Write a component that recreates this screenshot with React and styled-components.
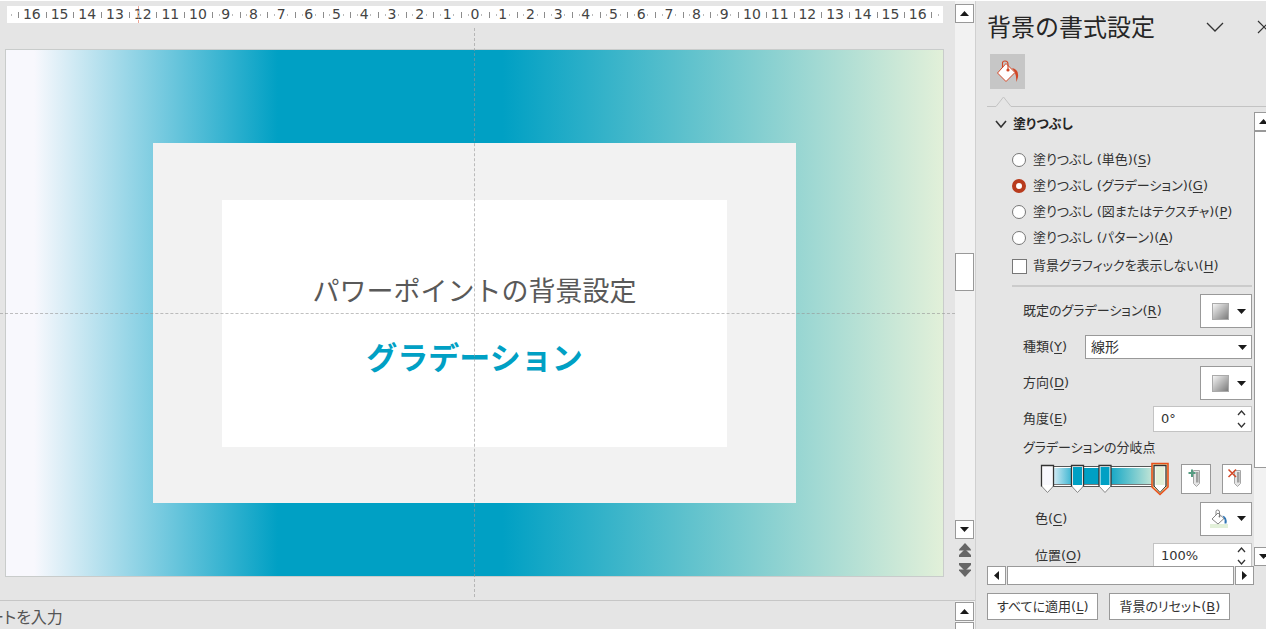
import React, { useState } from 'react';
import styled, { createGlobalStyle, css } from 'styled-components';

const GlobalStyle = createGlobalStyle`
    *, *::before, *::after {
        box-sizing: border-box;
    }

    body {
        margin: 0;
        overflow: hidden;
        background: #e5e5e5;
    }

    body, button, input, select {
        font-family: "DejaVu Sans", "Noto Sans CJK JP", sans-serif;
        font-size: 13px;
        line-height: 20px;
        color: #333;
        font-feature-settings: "palt";
    }

    u {
        text-underline-offset: 2px;
    }
`;

const Page = styled.div`
    display: flex;
    height: 100vh;
    border-top: 1px solid #fff;
`;

const EditorColumn = styled.main`
    flex: 1;
    min-width: 0;
    display: flex;
    flex-direction: column;
    border-right: 1px solid #d0d0d0;
`;

const SlideView = styled.section`
    flex: 1;
    min-height: 0;
    display: flex;
`;

const Workspace = styled.div`
    flex: 1;
    min-width: 0;
    overflow: hidden;
`;

/* ---- ruler ---- */

const RulerBar = styled.div`
    position: relative;
    display: grid;
    grid-template-columns: repeat(33, 1fr);
    margin: 5px 12px 0 7px;
    padding: 0 11px;
    height: 17px;
    background:
        linear-gradient(#bbb, #bbb) 4px 50% / 1px 2px no-repeat,
        linear-gradient(#bbb, #bbb) calc(100% - 4px) 50% / 1px 2px no-repeat,
        #fff;

    &::after {
        content: "";
        position: absolute;
        left: 14%;
        top: 0;
        bottom: 0;
        border-left: 1px dashed #eda697;
    }
`;

const RulerCell = styled.div`
    display: flex;
    justify-content: center;
    background:
        linear-gradient(#8c8c8c, #8c8c8c) 0 50% / 1px 6px no-repeat,
        linear-gradient(#bbb, #bbb) 25% 50% / 1px 2px no-repeat,
        linear-gradient(#bbb, #bbb) 75% 50% / 1px 2px no-repeat;

    &:last-child {
        border-right: 1px solid #8c8c8c;
        border-image: linear-gradient(transparent 35%, #8c8c8c 35%, #8c8c8c 70%, transparent 70%) 1;
    }
`;

const RulerNumber = styled.span`
    font-size: 14px;
    line-height: 17px;
    color: #444;
    background: #fff;
`;

/* ---- slide ---- */

const Slide = styled.div`
    position: relative;
    display: grid;
    grid-template-columns: 147fr 643fr 147fr;
    grid-template-rows: 93fr 361fr 73fr;
    margin: 26px 11px 0 5px;
    aspect-ratio: 16 / 9;
    border: 1px solid #c9cccb;
    background: linear-gradient(to right, #f8f8fd 0%, #f8f8fd 3%, #00a0c4 29%, #00a0c4 53%, #e2f0d9 100%);

    &::before {
        content: "";
        position: absolute;
        z-index: 1;
        left: calc(50% - 1px);
        top: -22px;
        bottom: -21px;
        border-left: 1px dashed rgba(150, 150, 150, 0.6);
    }

    &::after {
        content: "";
        position: absolute;
        z-index: 1;
        top: 50%;
        left: -6px;
        right: -12px;
        border-top: 1px dashed rgba(150, 150, 150, 0.6);
    }
`;

const SlideFrame = styled.div`
    grid-column: 2;
    grid-row: 2;
    display: flex;
    align-items: center;
    justify-content: center;
    background: #f2f2f2;
`;

const SlideCard = styled.div`
    width: 78.5%;
    height: 68.5%;
    display: flex;
    flex-direction: column;
    align-items: center;
    justify-content: center;
    gap: 26px;
    padding-top: 4px;
    background: #fff;
    font-feature-settings: normal;
`;

const SlideTitle = styled.h1`
    margin: 0;
    font-size: 27px;
    line-height: 40px;
    font-weight: 400;
    color: #595959;
`;

const SlideSubtitle = styled.p`
    margin: 0;
    font-size: 31px;
    line-height: 40px;
    font-weight: 700;
    color: #00a0c4;
`;

/* ---- scrollbars ---- */

const ScrollTrack = styled.div`
    display: flex;
    flex-direction: ${props => (props.$horizontal ? 'row' : 'column')};
    flex: none;
    background: ${props => (props.$plain ? 'transparent' : '#f2f2f2')};
    ${props => (props.$horizontal ? 'height: 20px;' : 'width: 20px;')}
`;

const ScrollButton = styled.button`
    flex: none;
    width: 19px;
    height: 19px;
    padding: 0;
    display: flex;
    align-items: center;
    justify-content: center;
    border: 1px solid #999;
    background: #fff;
`;

const ScrollSpace = styled.div`
    flex: ${props => props.$grow};
`;

const ScrollThumb = styled.div`
    flex: ${props => props.$grow || 'none'};
    ${props => (props.$horizontal ? 'height: 19px;' : 'width: 19px;')}
    min-height: ${props => (props.$horizontal ? 0 : '38px')};
    border: 1px solid #999;
    background: #fff;
`;

const PageJump = styled.div`
    display: flex;
    flex-direction: column;
    align-items: center;
    gap: 4px;
    padding: 3px 0 22px;
    background: #e5e5e5;
`;

const JumpButton = styled.button`
    display: block;
    width: 18px;
    height: 16px;
    padding: 0;
    border: 0;
    background: none;
    line-height: 0;
`;

/* ---- notes ---- */

const Notes = styled.section`
    flex: none;
    display: flex;
    justify-content: space-between;
    height: 29px;
    overflow: hidden;
    border-top: 1px solid #c6c6c6;
`;

const NotesText = styled.p`
    margin: 0 0 0 -12px;
    padding-top: 7px;
    font-size: 16px;
    line-height: 20px;
    color: #555;
`;

const NotesScroll = styled(ScrollTrack)`
    padding-top: 1px;
    gap: 1px;
    height: 48px;
`;

/* ---- format pane ---- */

const Pane = styled.aside`
    flex: none;
    width: 290px;
    overflow: hidden;
`;

const PaneInner = styled.div`
    width: 298px;
    height: 100%;
    display: flex;
    flex-direction: column;
    padding-left: 11px;
`;

const PaneHeader = styled.header`
    display: flex;
    align-items: center;
    height: 51px;
`;

const PaneTitle = styled.h2`
    flex: 1;
    margin: 0;
    padding-top: 2px;
    font-size: 24px;
    line-height: 36px;
    font-weight: 400;
    font-feature-settings: normal;
    color: #262626;
`;

const IconButton = styled.button`
    padding: 0;
    border: 0;
    background: none;
    line-height: 0;
    margin-right: ${props => props.$gap || 0}px;
`;

const TabButton = styled.button`
    width: 35px;
    height: 35px;
    margin: 2px 0 0 3px;
    padding: 0;
    border: 0;
    background: #c6c6c6;
    line-height: 0;
`;

const TabLine = styled.div`
    display: flex;
    align-items: flex-end;
    height: 11px;
    margin-top: 7px;

    &::before {
        content: "";
        width: 9px;
        border-bottom: 1px solid #c3c3c3;
    }

    &::after {
        content: "";
        flex: 1;
        border-bottom: 1px solid #c3c3c3;
    }
`;

const PaneBody = styled.div`
    flex: 1;
    min-height: 0;
    display: flex;
    gap: 2px;
    margin-top: 5px;
`;

const PaneContent = styled.div`
    flex: 1;
    min-width: 0;
    overflow: hidden;
`;

const SectionHeading = styled.button`
    display: flex;
    align-items: center;
    gap: 6px;
    height: 24px;
    padding: 0 0 0 8px;
    border: 0;
    background: none;
    font-weight: 700;
    color: #262626;
`;

const OptionGroup = styled.fieldset`
    margin: 11px 0 0;
    padding: 0 0 0 25px;
    border: 0;
`;

const Option = styled.label`
    display: flex;
    align-items: center;
    gap: ${props => (props.$check ? 6 : 7)}px;
    height: 26px;
    margin-top: ${props => (props.$check ? 2 : 0)}px;
    white-space: nowrap;
`;

const Radio = styled.input.attrs({ type: 'radio' })`
    appearance: none;
    width: 14px;
    height: 14px;
    margin: 0;
    border: 1px solid #777;
    border-radius: 50%;
    background: #fff;

    &:checked {
        border: 4px solid #b83b1d;
    }
`;

const Checkbox = styled.input.attrs({ type: 'checkbox' })`
    appearance: none;
    width: 15px;
    height: 15px;
    margin: 0;
    border: 1px solid #777;
    background: #fff;
`;

const Divider = styled.hr`
    margin: 6px 0 6px 25px;
    border: 0;
    border-top: 2px solid #cbcbcb;
`;

const Field = styled.div`
    display: flex;
    align-items: center;
    justify-content: space-between;
    height: ${props => (props.$indent ? 37 : 36)}px;
    padding-left: ${props => (props.$indent ? 48 : 36)}px;
    white-space: nowrap;
`;

const boxed = css`
    border: 1px solid #999;
    background: #fff;
`;

const PickerButton = styled.button`
    ${boxed}
    display: flex;
    align-items: center;
    justify-content: flex-end;
    gap: 8px;
    width: 52px;
    height: 34px;
    padding: 0 5px 0 0;
`;

const Swatch = styled.span`
    width: 17px;
    height: 17px;
    border: 1px solid #aaa;
    background: linear-gradient(135deg, #f4f4f4, #7c7c7c);
`;

const SelectBox = styled.div`
    ${boxed}
    display: flex;
    align-items: center;
    width: 167px;
    height: 24px;
    padding-right: 4px;
`;

const Select = styled.select`
    appearance: none;
    flex: 1;
    padding: 0 5px;
    border: 0;
    background: none;
    font-size: 14px;
`;

const SpinBox = styled.div`
    display: flex;
    align-items: center;
    width: 99px;
    height: 26px;
    padding-right: 5px;
    border: 1px solid #c3c3c3;
    background: #fff;
`;

const SpinInput = styled.input`
    flex: 1;
    min-width: 0;
    padding: 0 7px;
    border: 0;
    background: none;
`;

const SpinButtons = styled.div`
    display: flex;
    flex-direction: column;
    gap: 6px;
`;

const StopsLabel = styled.div`
    height: 21px;
    padding-left: 36px;
    line-height: 21px;
`;

const StopsRow = styled.div`
    display: flex;
    align-items: center;
    height: 42px;
    padding-left: 53px;
`;

const StopButton = styled.button`
    ${boxed}
    width: 30px;
    height: 30px;
    margin-left: ${props => props.$gap}px;
    padding: 0;
    line-height: 0;
`;

const HorizontalScroll = styled(ScrollTrack)`
    width: 267px;
    gap: 1px;
`;

const Footer = styled.footer`
    display: flex;
    gap: 11px;
    padding: 7px 0 9px;
`;

const FooterButton = styled.button`
    ${boxed}
    height: 27px;
    padding: 0 9px;
    white-space: nowrap;
`;

/* ---- icons ---- */

const TRIANGLES = {
    up: 'M0 5 L4.5 0 L9 5 Z',
    down: 'M0 0 L9 0 L4.5 5 Z',
    left: 'M5 0 L5 9 L0 4.5 Z',
    right: 'M0 0 L5 4.5 L0 9 Z',
};

function Triangle({ dir }) {
    const upright = dir === 'up' || dir === 'down';
    return (
        <svg width={upright ? 9 : 5} height={upright ? 5 : 9} fill="#1a1a1a">
            <path d={TRIANGLES[dir]} />
        </svg>
    );
}

function Chevron({ width, height, up, stroke = 1.3 }) {
    const d = up
        ? `M1 ${height - 1} L${width / 2} 1 L${width - 1} ${height - 1}`
        : `M1 1 L${width / 2} ${height - 1} L${width - 1} 1`;
    return (
        <svg width={width} height={height} fill="none" stroke="#333" strokeWidth={stroke}>
            <path d={d} />
        </svg>
    );
}

function DoubleTriangle({ flip }) {
    return (
        <svg width="18" height="16" viewBox="0 0 18 16" fill="#666">
            <g transform={flip ? 'rotate(180 9 8)' : undefined}>
                <path d="M9 1 L15 7.5 V8.5 H3 V7.5 Z" />
                <path d="M9 7 L15 13 V15 H3 V13 Z" />
            </g>
        </svg>
    );
}

function FillTabIcon() {
    return (
        <svg width="35" height="35" viewBox="0 0 35 35">
            <path d="M16 9.5 L25 18.5 L16 27.5 L7.5 19 Z" fill="#fff" stroke="#d24726" strokeWidth="1" />
            <path d="M12.5 14 V9 Q12.5 7 15 7 Q18 7 18 10 V15" fill="none" stroke="#d24726" strokeWidth="1.1" />
            <circle cx="18" cy="16" r="1.6" fill="#d24726" />
            <path d="M22 14 Q29 15.5 28 23 L26.5 28 Q26.5 22 24.5 17.5 Z" fill="#d24726" />
        </svg>
    );
}

function ColorIcon() {
    return (
        <svg width="20" height="20" viewBox="0 0 20 20">
            <rect x="1" y="15" width="18" height="4" fill="#e2f0d9" />
            <path d="M9 4 L15 9.5 L9 15 L3 10 Z" fill="#fff" stroke="#777" strokeWidth="0.9" />
            <path d="M7 6 V2.5 Q7 1 8.5 1 Q10.5 1 10.5 3 V7" fill="none" stroke="#777" strokeWidth="0.9" />
            <circle cx="10.5" cy="7.5" r="0.9" fill="#777" />
            <path d="M13.5 6.5 Q18.5 8 17.5 14.5 L15.5 14.5 Q16.5 11 14.5 8.5 Z" fill="#2f75b5" />
        </svg>
    );
}

function StopIcon({ remove }) {
    return (
        <svg width="28" height="28" viewBox="0 0 28 28">
            <path d="M11.5 5.5 H17.5 V18.5 L14.5 21.5 L11.5 18.5 Z" fill="#e4e4e4" stroke="#a6a6a6" />
            <path d="M14 7 H16.5 V17.5 H14 Z" fill="#a0a0a0" />
            {remove ? (
                <path d="M5.5 4.5 L13 12 M13 4.5 L5.5 12" stroke="#d24726" strokeWidth="1.5" />
            ) : (
                <path d="M10 4.5 V12 M6.5 8 H13.5" stroke="#569c82" strokeWidth="2" />
            )}
        </svg>
    );
}

const STOPS = [
    { x: 7.5, color: '#f8f8fd' },
    { x: 37.5, color: '#00a0c4' },
    { x: 65, color: '#00a0c4' },
    { x: 120, color: '#e2f0d9', selected: true },
];

function GradientStops() {
    return (
        <svg width="130" height="34" viewBox="0 0 130 34" role="img" aria-label="グラデーションの分岐点">
            <defs>
                <linearGradient id="stops" x1="0" x2="1">
                    <stop offset="0" stopColor="#f8f8fd" />
                    <stop offset="0.27" stopColor="#00a0c4" />
                    <stop offset="0.51" stopColor="#00a0c4" />
                    <stop offset="1" stopColor="#e2f0d9" />
                </linearGradient>
            </defs>
            <rect x="8.5" y="4.5" width="112" height="20" fill="#fff" stroke="#555" />
            <rect x="9" y="6" width="111" height="16" fill="url(#stops)" />
            <path d="M9 22.5 H120" stroke="#555" strokeWidth="0.8" />
            {STOPS.map(({ x, color, selected }) => (
                <g key={x} transform={`translate(${x} 0)`}>
                    {selected && (
                        <path d="M-8 1.5 H8 V25 L0 32.5 L-8 25 Z" fill="#ffe9a8" stroke="#e8501a" strokeWidth="1.6" />
                    )}
                    <path d="M-6 3.5 H6 V24 L0 30.5 L-6 24 Z" fill="#fff" />
                    <path d="M-6 24 L0 30.5 L6 24" fill="none" stroke={selected ? '#333' : '#888'} />
                    <path d="M-6 24.5 V3.5 H6 V24.5" fill="none" stroke="#333" strokeWidth="1.3" />
                    <rect x="-4.5" y="5" width="9" height="18" fill={color} />
                </g>
            ))}
        </svg>
    );
}

/* ---- parts ---- */

function Ruler() {
    const numbers = Array.from({ length: 33 }, (_, i) => Math.abs(i - 16));
    return (
        <RulerBar>
            {numbers.map((n, i) => (
                <RulerCell key={i}>
                    <RulerNumber>{n}</RulerNumber>
                </RulerCell>
            ))}
        </RulerBar>
    );
}

function Spinner({ id, defaultValue }) {
    return (
        <SpinBox>
            <SpinInput id={id} defaultValue={defaultValue} />
            <SpinButtons>
                <IconButton aria-label="増やす"><Chevron width={9} height={6} up /></IconButton>
                <IconButton aria-label="減らす"><Chevron width={9} height={6} /></IconButton>
            </SpinButtons>
        </SpinBox>
    );
}

const FILL_OPTIONS = [
    { value: 'solid', text: '塗りつぶし (単色)', accessKey: 'S' },
    { value: 'gradient', text: '塗りつぶし (グラデーション)', accessKey: 'G' },
    { value: 'picture', text: '塗りつぶし (図またはテクスチャ)', accessKey: 'P' },
    { value: 'pattern', text: '塗りつぶし (パターン)', accessKey: 'A' },
];

function FormatPane() {
    const [fill, setFill] = useState('gradient');
    const [hideGraphics, setHideGraphics] = useState(false);

    return (
        <Pane>
            <PaneInner>
                <PaneHeader>
                    <PaneTitle>背景の書式設定</PaneTitle>
                    <IconButton $gap={33} aria-label="作業ウィンドウのオプション">
                        <Chevron width={18} height={10} />
                    </IconButton>
                    <IconButton $gap={3} aria-label="閉じる">
                        <svg width="14" height="14" stroke="#333" strokeWidth="1.2">
                            <path d="M1 1 L13 13 M13 1 L1 13" />
                        </svg>
                    </IconButton>
                </PaneHeader>
                <TabButton aria-label="塗りつぶし"><FillTabIcon /></TabButton>
                <TabLine>
                    <svg width="15" height="11" fill="none" stroke="#c3c3c3">
                        <path d="M0 10.5 L7.5 1 L15 10.5" />
                    </svg>
                </TabLine>
                <PaneBody>
                    <PaneContent>
                        <SectionHeading>
                            <Chevron width={12} height={8} stroke={1.6} />
                            塗りつぶし
                        </SectionHeading>
                        <OptionGroup>
                            {FILL_OPTIONS.map(option => (
                                <Option key={option.value}>
                                    <Radio
                                        name="fill"
                                        checked={fill === option.value}
                                        onChange={() => setFill(option.value)}
                                    />
                                    <span>{option.text}(<u>{option.accessKey}</u>)</span>
                                </Option>
                            ))}
                            <Option $check>
                                <Checkbox
                                    checked={hideGraphics}
                                    onChange={e => setHideGraphics(e.target.checked)}
                                />
                                <span>背景グラフィックを表示しない(<u>H</u>)</span>
                            </Option>
                        </OptionGroup>
                        <Divider />
                        <Field>
                            <label htmlFor="preset">既定のグラデーション(<u>R</u>)</label>
                            <PickerButton id="preset"><Swatch /><Triangle dir="down" /></PickerButton>
                        </Field>
                        <Field>
                            <label htmlFor="type">種類(<u>Y</u>)</label>
                            <SelectBox>
                                <Select id="type">
                                    <option>線形</option>
                                </Select>
                                <Triangle dir="down" />
                            </SelectBox>
                        </Field>
                        <Field>
                            <label htmlFor="direction">方向(<u>D</u>)</label>
                            <PickerButton id="direction"><Swatch /><Triangle dir="down" /></PickerButton>
                        </Field>
                        <Field>
                            <label htmlFor="angle">角度(<u>E</u>)</label>
                            <Spinner id="angle" defaultValue="0°" />
                        </Field>
                        <StopsLabel>グラデーションの分岐点</StopsLabel>
                        <StopsRow>
                            <GradientStops />
                            <StopButton $gap={11} aria-label="追加"><StopIcon /></StopButton>
                            <StopButton $gap={11} aria-label="削除"><StopIcon remove /></StopButton>
                        </StopsRow>
                        <Field $indent>
                            <label htmlFor="color">色(<u>C</u>)</label>
                            <PickerButton id="color"><ColorIcon /><Triangle dir="down" /></PickerButton>
                        </Field>
                        <Field $indent>
                            <label htmlFor="position">位置(<u>O</u>)</label>
                            <Spinner id="position" defaultValue="100%" />
                        </Field>
                    </PaneContent>
                    <ScrollTrack>
                        <ScrollButton aria-label="上へ"><Triangle dir="up" /></ScrollButton>
                        <ScrollThumb $grow={337} />
                        <ScrollSpace $grow={80} />
                        <ScrollButton aria-label="下へ"><Triangle dir="down" /></ScrollButton>
                    </ScrollTrack>
                </PaneBody>
                <HorizontalScroll $horizontal $plain>
                    <ScrollButton aria-label="左へ"><Triangle dir="left" /></ScrollButton>
                    <ScrollThumb $horizontal $grow={1} />
                    <ScrollButton aria-label="右へ"><Triangle dir="right" /></ScrollButton>
                </HorizontalScroll>
                <Footer>
                    <FooterButton>すべてに適用(<u>L</u>)</FooterButton>
                    <FooterButton>背景のリセット(<u>B</u>)</FooterButton>
                </Footer>
            </PaneInner>
        </Pane>
    );
}

function App() {
    return (
        <>
            <GlobalStyle />
            <Page lang="ja">
                <EditorColumn>
                    <SlideView>
                        <Workspace>
                            <Ruler />
                            <Slide>
                                <SlideFrame>
                                    <SlideCard>
                                        <SlideTitle>パワーポイントの背景設定</SlideTitle>
                                        <SlideSubtitle>グラデーション</SlideSubtitle>
                                    </SlideCard>
                                </SlideFrame>
                            </Slide>
                        </Workspace>
                        <ScrollTrack>
                            <ScrollSpace $grow="0 0 3px" />
                            <ScrollButton aria-label="上へ"><Triangle dir="up" /></ScrollButton>
                            <ScrollSpace $grow={1} />
                            <ScrollThumb />
                            <ScrollSpace $grow={1} />
                            <ScrollButton aria-label="下へ"><Triangle dir="down" /></ScrollButton>
                            <PageJump>
                                <JumpButton aria-label="前のスライド"><DoubleTriangle /></JumpButton>
                                <JumpButton aria-label="次のスライド"><DoubleTriangle flip /></JumpButton>
                            </PageJump>
                        </ScrollTrack>
                    </SlideView>
                    <Notes>
                        <NotesText>ートを入力</NotesText>
                        <NotesScroll>
                            <ScrollButton aria-label="上へ"><Triangle dir="up" /></ScrollButton>
                            <ScrollButton aria-label="下へ"><Triangle dir="down" /></ScrollButton>
                        </NotesScroll>
                    </Notes>
                </EditorColumn>
                <FormatPane />
            </Page>
        </>
    );
}

export default App;
